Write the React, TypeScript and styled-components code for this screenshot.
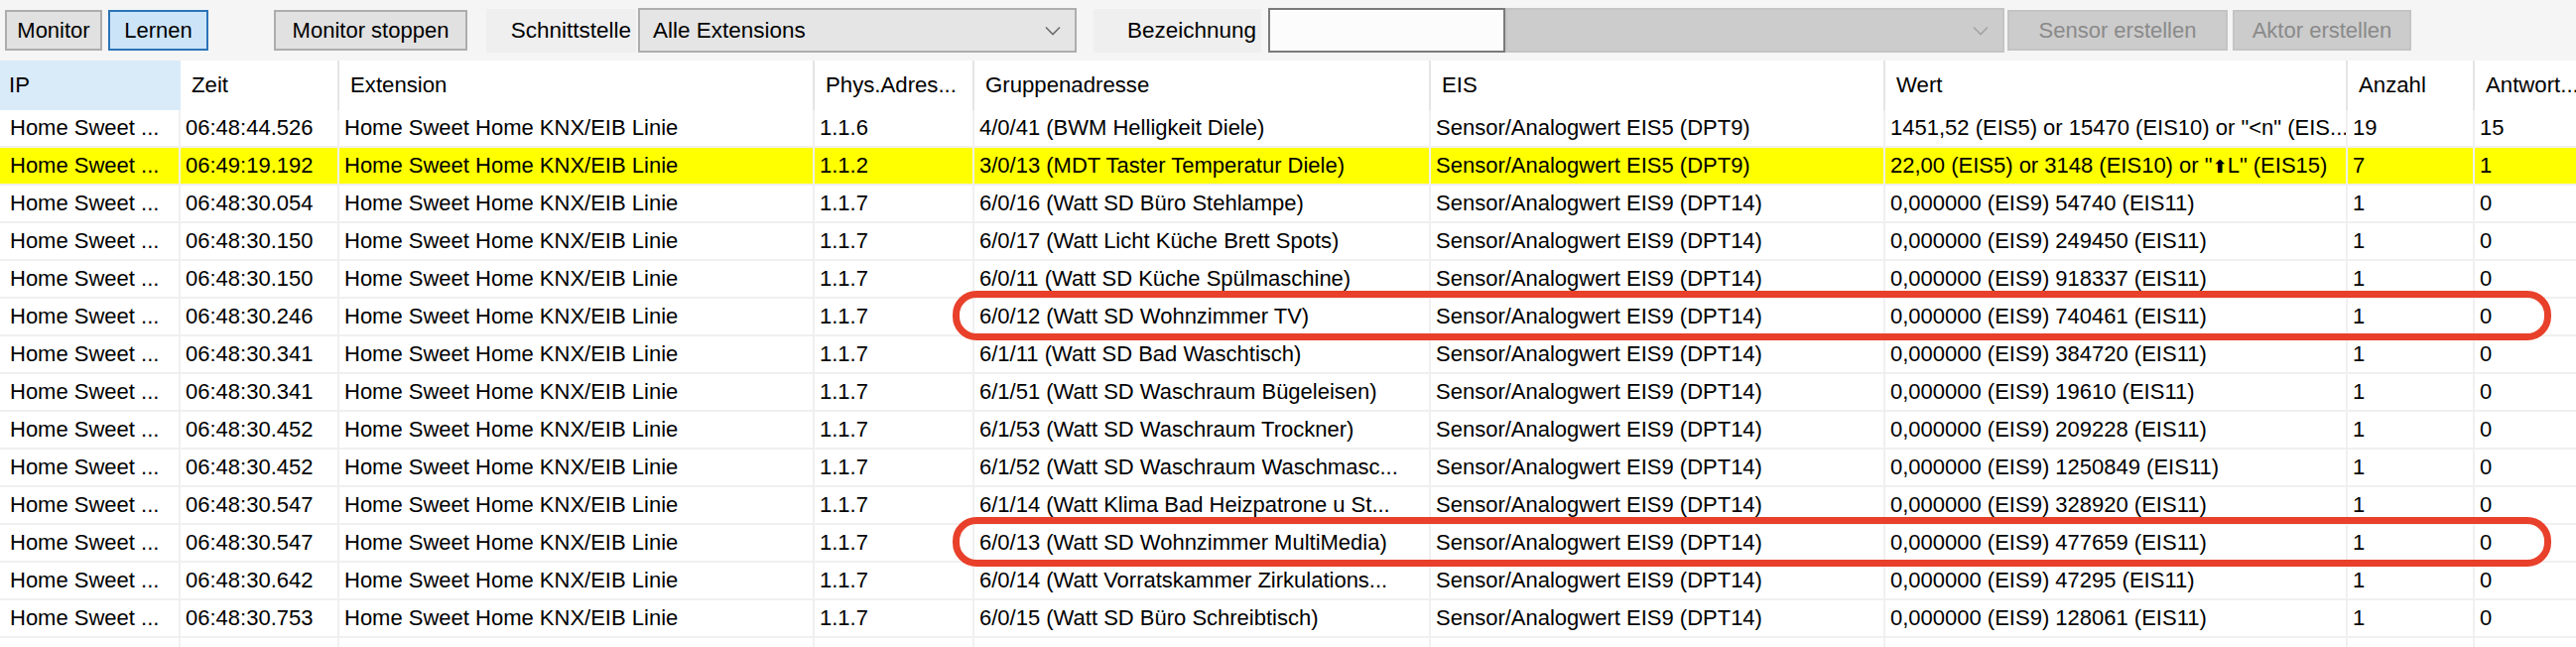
import React from 'react';
import styled, { createGlobalStyle, css } from 'styled-components';

const GlobalStyle = createGlobalStyle`
  html, body {
    margin: 0;
    padding: 0;
    background: #ffffff;
    overflow: hidden;
  }
  body {
    font-family: "Liberation Sans", Arial, sans-serif;
    font-size: 22.2px;
    color: #000000;
  }
`;

// column widths taken from the list header
const columns = [
  { title: 'IP', width: 182 },
  { title: 'Zeit', width: 160 },
  { title: 'Extension', width: 479 },
  { title: 'Phys.Adres...', width: 161 },
  { title: 'Gruppenadresse', width: 460 },
  { title: 'EIS', width: 458 },
  { title: 'Wert', width: 466 },
  { title: 'Anzahl', width: 128 },
  { title: 'Antwort...', width: 200 },
];

const gridTemplate = columns.map(c => `${c.width}px`).join(' ');

const EXT = 'Home Sweet Home KNX/EIB Linie';
const IP = 'Home Sweet ...';
const EIS9 = 'Sensor/Analogwert EIS9 (DPT14)';

type Telegram = {
  time: string;
  phys: string;
  group: string;
  eis: string;
  value: string;
  count: string;
  answers: string;
  highlight?: boolean;
  marked?: boolean;
};

const telegrams: Telegram[] = [
  { time: '06:48:44.526', phys: '1.1.6', group: '4/0/41 (BWM Helligkeit Diele)', eis: 'Sensor/Analogwert EIS5 (DPT9)', value: '1451,52 (EIS5) or 15470 (EIS10) or "<n" (EIS...', count: '19', answers: '15' },
  { time: '06:49:19.192', phys: '1.1.2', group: '3/0/13 (MDT Taster Temperatur Diele)', eis: 'Sensor/Analogwert EIS5 (DPT9)', value: '22,00 (EIS5) or 3148 (EIS10) or "⬆L" (EIS15)', count: '7', answers: '1', highlight: true },
  { time: '06:48:30.054', phys: '1.1.7', group: '6/0/16 (Watt SD Büro Stehlampe)', eis: EIS9, value: '0,000000 (EIS9) 54740 (EIS11)', count: '1', answers: '0' },
  { time: '06:48:30.150', phys: '1.1.7', group: '6/0/17 (Watt Licht Küche Brett Spots)', eis: EIS9, value: '0,000000 (EIS9) 249450 (EIS11)', count: '1', answers: '0' },
  { time: '06:48:30.150', phys: '1.1.7', group: '6/0/11 (Watt SD Küche Spülmaschine)', eis: EIS9, value: '0,000000 (EIS9) 918337 (EIS11)', count: '1', answers: '0' },
  { time: '06:48:30.246', phys: '1.1.7', group: '6/0/12 (Watt SD Wohnzimmer TV)', eis: EIS9, value: '0,000000 (EIS9) 740461 (EIS11)', count: '1', answers: '0', marked: true },
  { time: '06:48:30.341', phys: '1.1.7', group: '6/1/11 (Watt SD Bad Waschtisch)', eis: EIS9, value: '0,000000 (EIS9) 384720 (EIS11)', count: '1', answers: '0' },
  { time: '06:48:30.341', phys: '1.1.7', group: '6/1/51 (Watt SD Waschraum Bügeleisen)', eis: EIS9, value: '0,000000 (EIS9) 19610 (EIS11)', count: '1', answers: '0' },
  { time: '06:48:30.452', phys: '1.1.7', group: '6/1/53 (Watt SD Waschraum Trockner)', eis: EIS9, value: '0,000000 (EIS9) 209228 (EIS11)', count: '1', answers: '0' },
  { time: '06:48:30.452', phys: '1.1.7', group: '6/1/52 (Watt SD Waschraum Waschmasc...', eis: EIS9, value: '0,000000 (EIS9) 1250849 (EIS11)', count: '1', answers: '0' },
  { time: '06:48:30.547', phys: '1.1.7', group: '6/1/14 (Watt Klima Bad Heizpatrone u St...', eis: EIS9, value: '0,000000 (EIS9) 328920 (EIS11)', count: '1', answers: '0' },
  { time: '06:48:30.547', phys: '1.1.7', group: '6/0/13 (Watt SD Wohnzimmer MultiMedia)', eis: EIS9, value: '0,000000 (EIS9) 477659 (EIS11)', count: '1', answers: '0', marked: true },
  { time: '06:48:30.642', phys: '1.1.7', group: '6/0/14 (Watt Vorratskammer Zirkulations...', eis: EIS9, value: '0,000000 (EIS9) 47295 (EIS11)', count: '1', answers: '0' },
  { time: '06:48:30.753', phys: '1.1.7', group: '6/0/15 (Watt SD Büro Schreibtisch)', eis: EIS9, value: '0,000000 (EIS9) 128061 (EIS11)', count: '1', answers: '0' },
];

const Window = styled.div`
  width: 2596px;
  height: 652px;
  display: flex;
  flex-direction: column;
  overflow: hidden;
  background: #ffffff;
`;

const Toolbar = styled.div`
  height: 61px;
  flex: none;
  display: flex;
  align-items: center;
  padding-left: 4px;
  background: #f5f5f5;
  box-sizing: border-box;
`;

type ButtonVariant = 'normal' | 'checked' | 'disabled';

const ToolButton = styled.div<{ $variant?: ButtonVariant; $width: number; $gap?: number }>`
  width: ${({ $width }) => $width}px;
  height: 41px;
  margin-left: ${({ $gap }) => $gap ?? 0}px;
  box-sizing: border-box;
  display: flex;
  align-items: center;
  justify-content: center;
  background: #e1e1e1;
  border: 2px solid #adadad;
  color: #000000;
  font-size: 22px;
  white-space: nowrap;

  ${({ $variant }) =>
    $variant === 'checked' &&
    css`
      background: #cce4f7;
      border-color: #2a74b8;
    `}

  ${({ $variant }) =>
    $variant === 'disabled' &&
    css`
      background: #cccccc;
      border-color: #c4c4c4;
      color: #8a8a8a;
    `}
`;

const FieldLabel = styled.div<{ $width: number; $gap: number }>`
  width: ${({ $width }) => $width}px;
  height: 44px;
  margin-left: ${({ $gap }) => $gap}px;
  box-sizing: border-box;
  padding-right: 5px;
  display: flex;
  align-items: center;
  justify-content: flex-end;
  background: #efefef;
  font-size: 22.5px;
`;

const Combo = styled.div<{ $width: number; $gap: number; $disabled?: boolean }>`
  width: ${({ $width }) => $width}px;
  height: 45px;
  margin-left: ${({ $gap }) => $gap}px;
  box-sizing: border-box;
  display: flex;
  align-items: center;
  padding: 0 14px 0 13px;
  background: ${({ $disabled }) => ($disabled ? '#cccccc' : '#e5e5e5')};
  border: 2px solid ${({ $disabled }) => ($disabled ? '#c4c4c4' : '#adadad')};
  color: ${({ $disabled }) => ($disabled ? '#8a8a8a' : '#000000')};
  font-size: 22.5px;
`;

const ComboText = styled.span`
  flex: 1;
  white-space: nowrap;
`;

const TextField = styled.div<{ $width: number; $gap: number }>`
  width: ${({ $width }) => $width}px;
  height: 45px;
  margin-left: ${({ $gap }) => $gap}px;
  box-sizing: border-box;
  background: #fcfcfc;
  border: 2px solid #7a7a7a;
`;

const ListView = styled.div`
  flex: 1;
  overflow: hidden;
  background: #ffffff;
`;

const HeaderRow = styled.div`
  display: grid;
  grid-template-columns: ${gridTemplate};
  height: 50px;
`;

const HeaderCell = styled.div<{ $hot?: boolean; $first?: boolean }>`
  display: flex;
  align-items: center;
  padding-left: ${({ $first }) => ($first ? 9 : 11)}px;
  box-sizing: border-box;
  background: ${({ $hot }) => ($hot ? '#d9ebf9' : '#ffffff')};
  border-right: 2px solid ${({ $hot }) => ($hot ? '#d9ebf9' : '#e5e5e5')};
  white-space: nowrap;
  overflow: hidden;
`;

const Row = styled.div<{ $highlight?: boolean; $marked?: boolean }>`
  position: relative;
  display: grid;
  grid-template-columns: ${gridTemplate};
  height: 38px;
  box-sizing: border-box;
  border-bottom: 2px solid #f0f0f0;
  background: ${({ $highlight }) => ($highlight ? '#ffff00' : '#ffffff')};

  ${({ $marked }) =>
    $marked &&
    css`
      &::after {
        content: '';
        position: absolute;
        left: 960px;
        width: 1611px;
        top: -8px;
        bottom: -6px;
        box-sizing: border-box;
        border: 7px solid #e8402a;
        border-radius: 24px;
        z-index: 2;
        pointer-events: none;
      }
    `}
`;

const Cell = styled.div<{ $first?: boolean }>`
  display: flex;
  align-items: center;
  padding-left: ${({ $first }) => ($first ? 10 : 5)}px;
  box-sizing: border-box;
  border-right: 2px solid #f0f0f0;
  font-size: 22px;
  white-space: nowrap;
  overflow: hidden;
`;

const Glyph = styled.span`
  font-family: "DejaVu Sans", sans-serif;
  font-size: 18px;
  font-weight: bold;
`;

const Chevron: React.FC<{ color: string }> = ({ color }) => (
  <svg width="16" height="10" viewBox="0 0 16 10">
    <polyline points="1,1.5 8,8.5 15,1.5" fill="none" stroke={color} strokeWidth="1.6" />
  </svg>
);

const renderValue = (value: string) => {
  const i = value.indexOf('⬆');
  if (i < 0) return value;
  return (
    <>
      {value.slice(0, i)}
      <Glyph>⬆</Glyph>
      {value.slice(i + 1)}
    </>
  );
};

const App: React.FC = () => {
  return (
    <>
      <GlobalStyle />
      <Window>
        <Toolbar>
          <ToolButton $width={98} $gap={1}>Monitor</ToolButton>
          <ToolButton $width={101} $gap={6} $variant="checked">Lernen</ToolButton>
          <ToolButton $width={195} $gap={66}>Monitor stoppen</ToolButton>
          <FieldLabel $width={151} $gap={19}>Schnittstelle</FieldLabel>
          <Combo $width={442} $gap={2}>
            <ComboText>Alle Extensions</ComboText>
            <Chevron color="#6d6d6d" />
          </Combo>
          <FieldLabel $width={169} $gap={17}>Bezeichnung</FieldLabel>
          <TextField $width={239} $gap={7} />
          <Combo $width={503} $gap={0} $disabled>
            <ComboText />
            <Chevron color="#a3a3a3" />
          </Combo>
          <ToolButton $width={222} $gap={3} $variant="disabled">Sensor erstellen</ToolButton>
          <ToolButton $width={180} $gap={5} $variant="disabled">Aktor erstellen</ToolButton>
        </Toolbar>

        <ListView>
          <HeaderRow>
            {columns.map((c, i) => (
              <HeaderCell key={c.title} $hot={i === 0} $first={i === 0}>
                {c.title}
              </HeaderCell>
            ))}
          </HeaderRow>

          {telegrams.map((t, i) => (
            <Row key={i} $highlight={t.highlight} $marked={t.marked}>
              <Cell $first>{IP}</Cell>
              <Cell>{t.time}</Cell>
              <Cell>{EXT}</Cell>
              <Cell>{t.phys}</Cell>
              <Cell>{t.group}</Cell>
              <Cell>{t.eis}</Cell>
              <Cell>{renderValue(t.value)}</Cell>
              <Cell>{t.count}</Cell>
              <Cell>{t.answers}</Cell>
            </Row>
          ))}

          <Row>
            {columns.map(c => (
              <Cell key={c.title} />
            ))}
          </Row>
        </ListView>
      </Window>
    </>
  );
};

export default App;
